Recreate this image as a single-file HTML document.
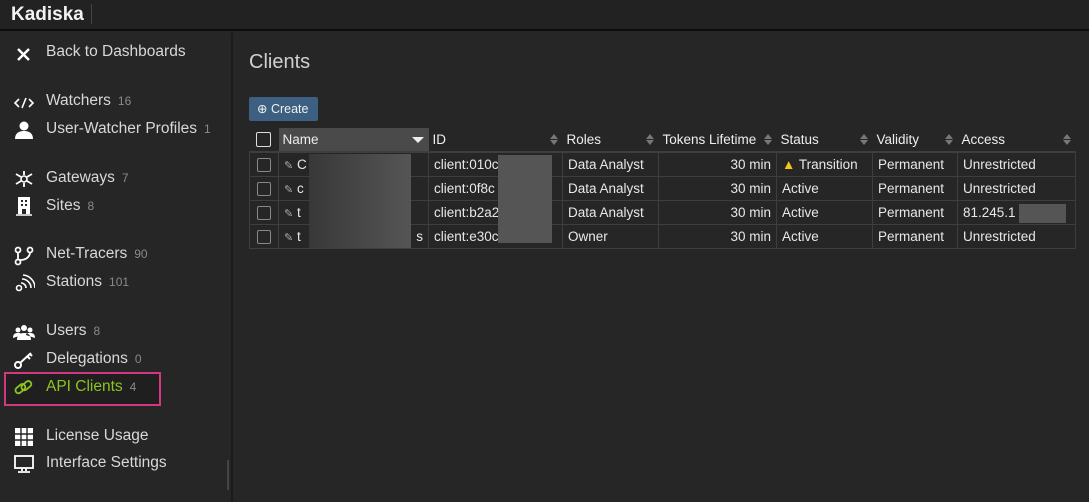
<!DOCTYPE html>
<html><head><meta charset="utf-8"><style>
*{box-sizing:border-box;margin:0;padding:0}
html,body{width:1089px;height:502px;overflow:hidden}
body{background:#262627;font-family:"Liberation Sans",sans-serif;color:#e6e6e6;position:relative}
.top{position:absolute;left:0;top:0;width:1089px;height:31px;background:#222223;border-bottom:2px solid #0d0d0d}
.logo{position:absolute;left:11px;top:4px;font-size:19px;font-weight:bold;color:#f2f2f2}
.vsep{position:absolute;left:91px;top:4px;width:1px;height:20px;background:#444}
.side{position:absolute;left:0;top:33px;width:233px;height:469px;background:#262627;border-right:2px solid #1b1b1b}
.it{position:absolute;left:46px;font-size:15.5px;color:#d8d8d8;white-space:nowrap}
.it .n{font-size:12px;color:#8a8a8a;margin-left:7px}
.ic{position:absolute;left:13px;width:22px;height:20px}
.hl{position:absolute;left:4px;top:339px;width:157px;height:34px;border:2px solid #d4367f;background:#1f1f20}
.scroll{position:absolute;left:227px;top:427px;width:2px;height:30px;background:#444}
h1{position:absolute;left:249px;top:51px;font-size:20px;font-weight:normal;color:#d0d0d0}
.btn{position:absolute;left:249px;top:97px;width:69px;height:24px;background:#3c5f82;border-radius:2px;color:#f0f0f0;font-size:12.5px;padding:4px 0 0 8px}
table{position:absolute;left:249px;top:128px;border-collapse:collapse;font-size:13.5px;table-layout:fixed}
th{height:24px;text-align:left;font-weight:normal;color:#eee;padding:0 4px;position:relative}
td{height:24px;border:1px solid #3e3e3e;padding:0 5px;color:#e8e8e8;white-space:nowrap;overflow:hidden}
tr.h th{border-bottom:2px solid #3e3e3e}
.sort{position:absolute;right:5px;top:6px;width:8px;height:12px}
.sort:before{content:"";position:absolute;left:0;top:0;border:4px solid transparent;border-bottom:5px solid #777;border-top:0}
.sort:after{content:"";position:absolute;left:0;top:6px;border:4px solid transparent;border-top:5px solid #777;border-bottom:0}
.cb{display:inline-block;width:14px;height:14px;border:1px solid #888;border-radius:2px;margin-left:2px;vertical-align:middle}
.blur1{position:absolute;left:309px;top:154px;width:102px;height:94px;background:linear-gradient(90deg,#383838,#555)}
.blur2{position:absolute;left:498px;top:155px;width:54px;height:88px;background:#555}
.blur3{position:absolute;left:1019px;top:204px;width:47px;height:19px;background:#555}
</style></head><body>
<div class="top"><div class="logo">Kadiska</div><div class="vsep"></div></div>
<div class="side">
<div class="hl"></div>
<svg class="ic" style="top:12px" viewBox="0 0 22 20"><path d="M5 4l11 11M16 4L5 15" stroke="#fff" stroke-width="2.4"/></svg>
<div class="it" style="top:10px">Back to Dashboards</div>
<svg class="ic" style="top:60px" viewBox="0 0 22 20"><path d="M6 6l-4 4 4 4M16 6l4 4-4 4M13 5l-4 10" stroke="#fff" stroke-width="1.6" fill="none"/></svg>
<div class="it" style="top:59px">Watchers<span class="n">16</span></div>
<svg class="ic" style="top:87px" viewBox="0 0 22 20"><circle cx="11" cy="6" r="4.5" fill="#fff"/><path d="M2 19c0-6 4-8 9-8s9 2 9 8z" fill="#fff"/></svg>
<div class="it" style="top:87px">User-Watcher Profiles<span class="n">1</span></div>
<svg class="ic" style="top:136px" viewBox="0 0 22 20"><circle cx="11" cy="10" r="3" stroke="#fff" stroke-width="1.6" fill="none"/><path d="M11 2v4M11 14v4M3 5l5 3M14 12l5 3M3 15l5-3M14 8l5-3" stroke="#fff" stroke-width="1.8"/></svg>
<div class="it" style="top:136px">Gateways<span class="n">7</span></div>
<svg class="ic" style="top:163px" viewBox="0 0 22 20"><path d="M5 1h12v17H5z" fill="#fff"/><path d="M8 4h2v2H8zM12 4h2v2h-2zM8 8h2v2H8zM12 8h2v2h-2zM9 13h4v5H9z" fill="#262627"/><path d="M3 19h16" stroke="#fff" stroke-width="1.5"/></svg>
<div class="it" style="top:164px">Sites<span class="n">8</span></div>
<svg class="ic" style="top:213px" viewBox="0 0 22 20"><circle cx="5" cy="4" r="2.5" stroke="#fff" stroke-width="1.8" fill="none"/><circle cx="17" cy="4" r="2.5" stroke="#fff" stroke-width="1.8" fill="none"/><circle cx="5" cy="16" r="2.5" stroke="#fff" stroke-width="1.8" fill="none"/><path d="M5 7v6M7 14c6 0 10-3 10-8" stroke="#fff" stroke-width="1.8" fill="none"/></svg>
<div class="it" style="top:212px">Net-Tracers<span class="n">90</span></div>
<svg class="ic" style="top:240px" viewBox="0 0 22 20"><circle cx="6" cy="15" r="2.5" stroke="#fff" stroke-width="1.6" fill="none"/><path d="M8 10a5 5 0 015 5M9 6a9 9 0 019 9M10 2a13 13 0 0112 13" stroke="#fff" stroke-width="1.6" fill="none"/></svg>
<div class="it" style="top:240px">Stations<span class="n">101</span></div>
<svg class="ic" style="top:289px" viewBox="0 0 22 20"><circle cx="5" cy="8" r="2.5" fill="#fff"/><circle cx="17" cy="8" r="2.5" fill="#fff"/><circle cx="11" cy="6" r="3" fill="#fff"/><path d="M0 16c0-4 2-5 5-5s4 1 4 2M22 16c0-4-2-5-5-5s-4 1-4 2M4 18c0-5 3-7 7-7s7 2 7 7z" fill="#fff"/></svg>
<div class="it" style="top:289px">Users<span class="n">8</span></div>
<svg class="ic" style="top:317px" viewBox="0 0 22 20"><circle cx="5" cy="15" r="3" stroke="#fff" stroke-width="2" fill="none"/><path d="M7 13L18 3M14 6l3 3M17 4l2 2" stroke="#fff" stroke-width="2"/></svg>
<div class="it" style="top:317px">Delegations<span class="n">0</span></div>
<svg class="ic" style="top:345px" viewBox="0 0 22 20"><rect x="2" y="8" width="11" height="6" rx="3" transform="rotate(-40 7 11)" stroke="#8fc31f" stroke-width="1.8" fill="none"/><rect x="8" y="5" width="11" height="6" rx="3" transform="rotate(-40 13 8)" stroke="#8fc31f" stroke-width="1.8" fill="none"/></svg>
<div class="it" style="top:345px;color:#8fc31f">API Clients<span class="n">4</span></div>
<svg class="ic" style="top:394px" viewBox="0 0 22 20"><path d="M2 1h18v18H2z" fill="#fff"/><path d="M8 1v18M14 1v18M2 7h18M2 13h18" stroke="#262627" stroke-width="1.4"/></svg>
<div class="it" style="top:394px">License Usage</div>
<svg class="ic" style="top:421px" viewBox="0 0 22 20"><rect x="2" y="2" width="18" height="12" stroke="#fff" stroke-width="1.8" fill="none"/><path d="M9 14v3M13 14v3M5 18h12" stroke="#fff" stroke-width="1.8"/></svg>
<div class="it" style="top:421px">Interface Settings</div>
<div class="scroll"></div>
</div>
<h1>Clients</h1>
<div class="btn">⊕ Create</div>
<table>
<colgroup><col style="width:29px"><col style="width:150px"><col style="width:134px"><col style="width:96px"><col style="width:118px"><col style="width:96px"><col style="width:85px"><col style="width:118px"></colgroup>
<tr class="h"><th><span class="cb" style="border-color:#ddd;width:15px;height:15px"></span></th><th style="background:#4a4a4a">Name<span style="position:absolute;right:5px;top:9px;border:6px solid transparent;border-top:6px solid #eee;border-bottom:0"></span></th><th>ID<span class="sort"></span></th><th>Roles<span class="sort"></span></th><th>Tokens Lifetime<span class="sort"></span></th><th>Status<span class="sort"></span></th><th>Validity<span class="sort"></span></th><th>Access<span class="sort"></span></th></tr>
<tr><td><span class="cb"></span></td><td><span style="color:#aaa;font-size:11px">✎</span> C</td><td>client:010c</td><td>Data Analyst</td><td style="text-align:right">30 min</td><td><span style="color:#f5c518">▲</span> Transition</td><td>Permanent</td><td>Unrestricted</td></tr>
<tr><td><span class="cb"></span></td><td><span style="color:#aaa;font-size:11px">✎</span> c</td><td>client:0f8c</td><td>Data Analyst</td><td style="text-align:right">30 min</td><td>Active</td><td>Permanent</td><td>Unrestricted</td></tr>
<tr><td><span class="cb"></span></td><td><span style="color:#aaa;font-size:11px">✎</span> t</td><td>client:b2a2</td><td>Data Analyst</td><td style="text-align:right">30 min</td><td>Active</td><td>Permanent</td><td>81.245.1</td></tr>
<tr><td><span class="cb"></span></td><td><span style="color:#aaa;font-size:11px">✎</span> t<span style="float:right">s</span></td><td>client:e30c</td><td>Owner</td><td style="text-align:right">30 min</td><td>Active</td><td>Permanent</td><td>Unrestricted</td></tr>
</table>
<div class="blur1"></div><div class="blur2"></div><div class="blur3"></div>
</body></html>
